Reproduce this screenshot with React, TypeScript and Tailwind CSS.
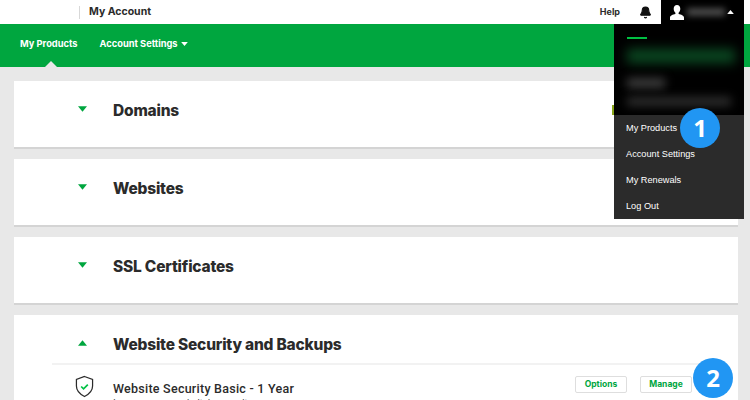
import { Bell } from "lucide-react";

const collapsed = ["Domains", "Websites", "SSL Certificates"];
const menuLinks = ["My Products", "Account Settings", "My Renewals", "Log Out"];

function Caret({ up, className }: { up?: boolean; className: string }) {
  return (
    <svg viewBox="0 0 10 6" className={className} fill="currentColor">
      <path d={up ? "M5 0l5 6H0z" : "M0 0h10L5 6z"} />
    </svg>
  );
}

function Badge({ n, className }: { n: number; className: string }) {
  return (
    <div className={`absolute flex h-10 w-10 items-center justify-center rounded-full bg-[#2196f3] font-['Open_Sans',sans-serif] text-[24px] font-bold text-white ${className}`}>
      {n}
    </div>
  );
}

function ProductCard({ title }: { title: string }) {
  return (
    <div className="flex h-[66px] items-center bg-white pb-[6px] pl-[64px] shadow-[0_2px_0_#d4d4d4]">
      <Caret className="mb-[4px] h-[6px] w-[9px] text-[#00a63f]" />
      <h2 className="ml-[26px] font-['Inter',sans-serif] text-[15.500px] font-extrabold tracking-[-0.2px] text-[#2b2b2b]">{title}</h2>
    </div>
  );
}

export default function App() {
  return (
    <div className="relative h-[400px] w-[750px] overflow-hidden bg-[#e8e8e8] font-['Liberation_Sans',sans-serif]">
      <header className="flex h-6 items-center bg-white">
        <div className="ml-[79px] h-[13px] w-px bg-[#d8d8d8]" />
        <span className="ml-[9px] font-['Inter',sans-serif] text-[10.500px] font-bold text-[#2b2b2b]">My Account</span>
        <div className="ml-auto mr-[98px] flex items-center gap-[19px]">
          <span className="font-['Inter',sans-serif] text-[9px] font-bold text-[#2b2b2b]">Help</span>
          <Bell className="h-[13px] w-[13px] text-[#111]" fill="currentColor" />
        </div>
      </header>

      <nav className="relative flex h-[43px] items-center gap-[22px] bg-[#00a63f] pb-1 pl-5 font-['Inter',sans-serif] text-[9.300px] font-bold text-white">
        <span>My Products</span>
        <span className="flex items-center gap-[3px]">
          Account Settings
          <Caret className="h-[4px] w-[7px]" />
        </span>
        <div className="absolute bottom-0 left-[45px] h-0 w-0 border-x-[6px] border-b-[6px] border-x-transparent border-b-[#e8e8e8]" />
      </nav>

      <main className="flex flex-col gap-3 py-[14px] pl-[14px] pr-3">
        {collapsed.map((t) => (
          <ProductCard key={t} title={t} />
        ))}
        <section className="h-[100px] bg-white">
          <div className="mx-[38px] flex h-[50px] items-center border-b-2 border-[#f2f2f2] pl-[26px] pt-[12px]">
            <Caret up className="mb-[4px] h-[6px] w-[9px] text-[#00a63f]" />
            <h2 className="ml-[26px] font-['Inter',sans-serif] text-[15.500px] font-extrabold tracking-[-0.2px] text-[#2b2b2b]">Website Security and Backups</h2>
          </div>
          <div className="flex items-start pl-[61px] pr-[46px] pt-[16px]">
            <svg viewBox="0 0 20 24" className="-mt-[6px] h-[23px] w-[19px] shrink-0" fill="none">
              <path d="M10 1.500l8.500 3v7c0 5-3.500 8.500-8.500 11-5-2.500-8.500-6-8.500-11v-7z" stroke="#2b2b2b" strokeWidth="1.300" />
              <path d="M6.500 12l2.500 2.500 4.500-4.500" stroke="#00c244" strokeWidth="1.800" />
            </svg>
            <div className="ml-[19px]">
              <div className="font-['Roboto',sans-serif] text-[12.500px] font-medium leading-[15px] tracking-[0.25px] text-[#2b2b2b]">Website Security Basic - 1 Year</div>
              <div className="text-[10px] text-[#444]">Improve your website's security</div>
            </div>
            <div className="-mt-[5px] ml-auto flex gap-[13px] font-['Inter',sans-serif] text-[8.500px] font-bold text-[#00a63f]">
              <span className="flex h-[17px] w-[52px] items-center justify-center rounded-[2px] border border-[#dedede]">Options</span>
              <span className="flex h-[17px] w-[52px] items-center justify-center rounded-[2px] border border-[#dedede]">Manage</span>
            </div>
          </div>
        </section>
      </main>

      <div className="absolute left-[612px] top-[105px] h-[10px] w-[2px] bg-[#8aa61a]" />

      <div className="absolute right-[6px] top-0 w-[130px]">
        <div className="ml-[47px] flex h-6 items-center bg-black pl-[9px] text-white">
          <svg viewBox="0 0 14 15" className="h-[15px] w-[14px]" fill="currentColor">
            <path d="M7 0c2 0 3.300 1.500 3.300 3.800 0 1.700-.7 3.200-1.700 4v1.300c2.500.6 5.400 1.500 5.400 3.400V15H0v-2.500c0-1.900 2.900-2.800 5.400-3.400V7.800c-1-.8-1.700-2.300-1.700-4C3.700 1.500 5 0 7 0z" />
          </svg>
          <div className="ml-[3px] h-[8px] w-[38px] bg-[#4a4a4a] blur-[3px]" />
          <Caret up className="ml-[2px] h-[4px] w-[7px]" />
        </div>
        <div className="h-[91px] overflow-hidden bg-black px-[13px] pt-[13px]">
          <div className="h-[2px] w-5 bg-[#00c244]" />
          <div className="mt-[10px] h-[14px] w-[108px] bg-[#0a4a22] blur-[6px]" />
          <div className="mt-[15px] h-[10px] w-[38px] bg-[#3c3c3c] blur-[5px]" />
          <div className="mt-[9px] h-[9px] w-[104px] bg-[#2e2e2e] blur-[5px]" />
        </div>
        <ul className="flex flex-col bg-[#2b2b2b] text-[9.200px] text-white">
          {menuLinks.map((l) => (
            <li key={l} className="flex h-[26px] items-center pl-3 pt-[2px]">{l}</li>
          ))}
        </ul>
      </div>

      <Badge n={1} className="left-[680px] top-[108px]" />
      <Badge n={2} className="left-[693px] top-[358px]" />
    </div>
  );
}
